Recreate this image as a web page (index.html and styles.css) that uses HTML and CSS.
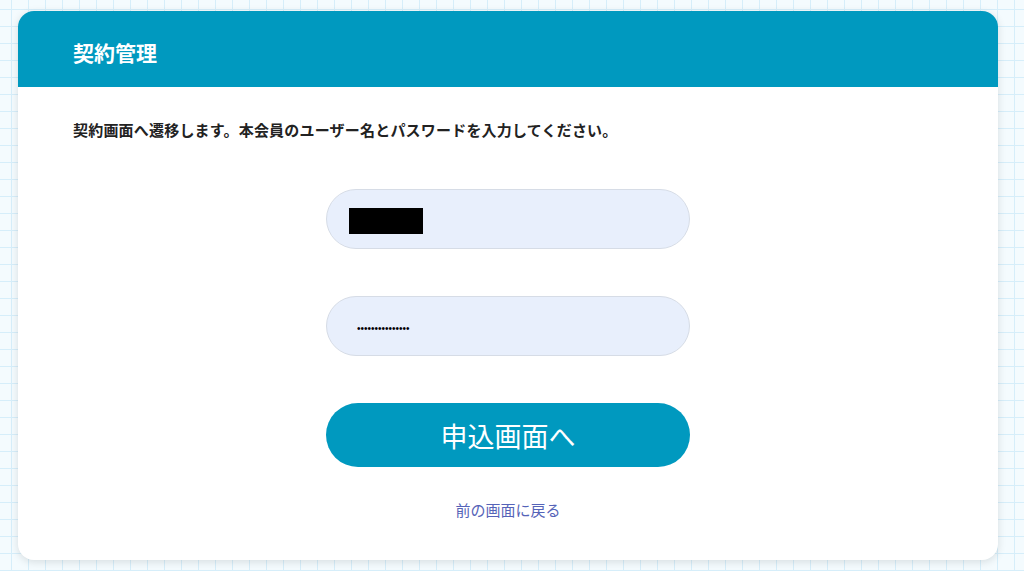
FILE: index.html
```html
<!DOCTYPE html>
<html lang="ja">
<head>
  <meta charset="UTF-8">
  <meta name="viewport" content="width=device-width, initial-scale=1.0">
  <title>契約管理</title>
  <link rel="stylesheet" href="styles.css">
</head>
<body>
  <div class="card">
    <div class="card-header">
      <h2>契約管理</h2>
    </div>
    <div class="card-body">
      <p class="lead">契約画面へ遷移します。本会員のユーザー名とパスワードを入力してください。</p>

      <form class="login" onsubmit="return false;">
        <div class="field">
          <input type="text" id="username" value="">
          <span class="redact"></span>
        </div>
        <div class="field">
          <input type="password" id="password" class="pw" value="aaaaaaaaaaaaaaa">
        </div>
        <button type="submit">申込画面へ</button>
        <a class="back" href="#">前の画面に戻る</a>
      </form>
    </div>
  </div>
</body>
</html>
```

FILE: styles.css
```css
html, body {
  margin: 0;
  height: 100%;
}
body {
  font-family: "Noto Sans CJK JP", "Noto Sans", sans-serif;
  background-color: #f4fbfe;
  background-image:
    linear-gradient(to right, #d6eefa 1px, transparent 1px),
    linear-gradient(to bottom, #d6eefa 1px, transparent 1px);
  background-size: 17px 17px;
  background-position: 11px 9px;
  padding: 11px 26px 0 18px;
  box-sizing: border-box;
}
.card {
  background: #fff;
  border-radius: 16px;
  overflow: hidden;
  box-shadow: 0 2px 8px rgba(0, 0, 0, 0.12);
}
.card-header {
  background-color: #0099bf;
  height: 76px;
  box-sizing: border-box;
  display: flex;
  align-items: center;
  padding: 6px 55px 0;
}
.card-header h2 {
  margin: 0;
  color: #fff;
  font-size: 21px;
  font-weight: bold;
}
.card-body {
  padding: 32px 55px 40px;
}
.lead {
  margin: 0;
  font-size: 15px;
  letter-spacing: 0.2px;
  line-height: 22px;
  font-weight: bold;
  color: #222;
}
.login {
  width: 364px;
  margin: 48px auto 0;
  display: flex;
  flex-direction: column;
  align-items: center;
}
.field {
  position: relative;
  width: 100%;
  margin-bottom: 47px;
}
.field input {
  width: 100%;
  height: 60px;
  box-sizing: border-box;
  padding: 0 30px;
  border: 1px solid #d6dce6;
  border-radius: 30px;
  background-color: #e8effc;
  font-size: 16px;
  color: #000;
  outline: none;
}
.field input.pw {
  font-family: "Liberation Sans", sans-serif;
  font-size: 10px;
  padding-top: 4px;
}
.redact {
  position: absolute;
  left: 23px;
  top: 19px;
  width: 74px;
  height: 26px;
  background: #000;
}
button {
  width: 100%;
  height: 64px;
  border: none;
  border-radius: 32px;
  background-color: #0099bf;
  color: #fff;
  font-family: inherit;
  font-size: 27px;
  cursor: pointer;
}
button:hover {
  background-color: #0088aa;
}
.back {
  margin-top: 32px;
  font-size: 15px;
  color: #5563b8;
  text-decoration: none;
}
```
